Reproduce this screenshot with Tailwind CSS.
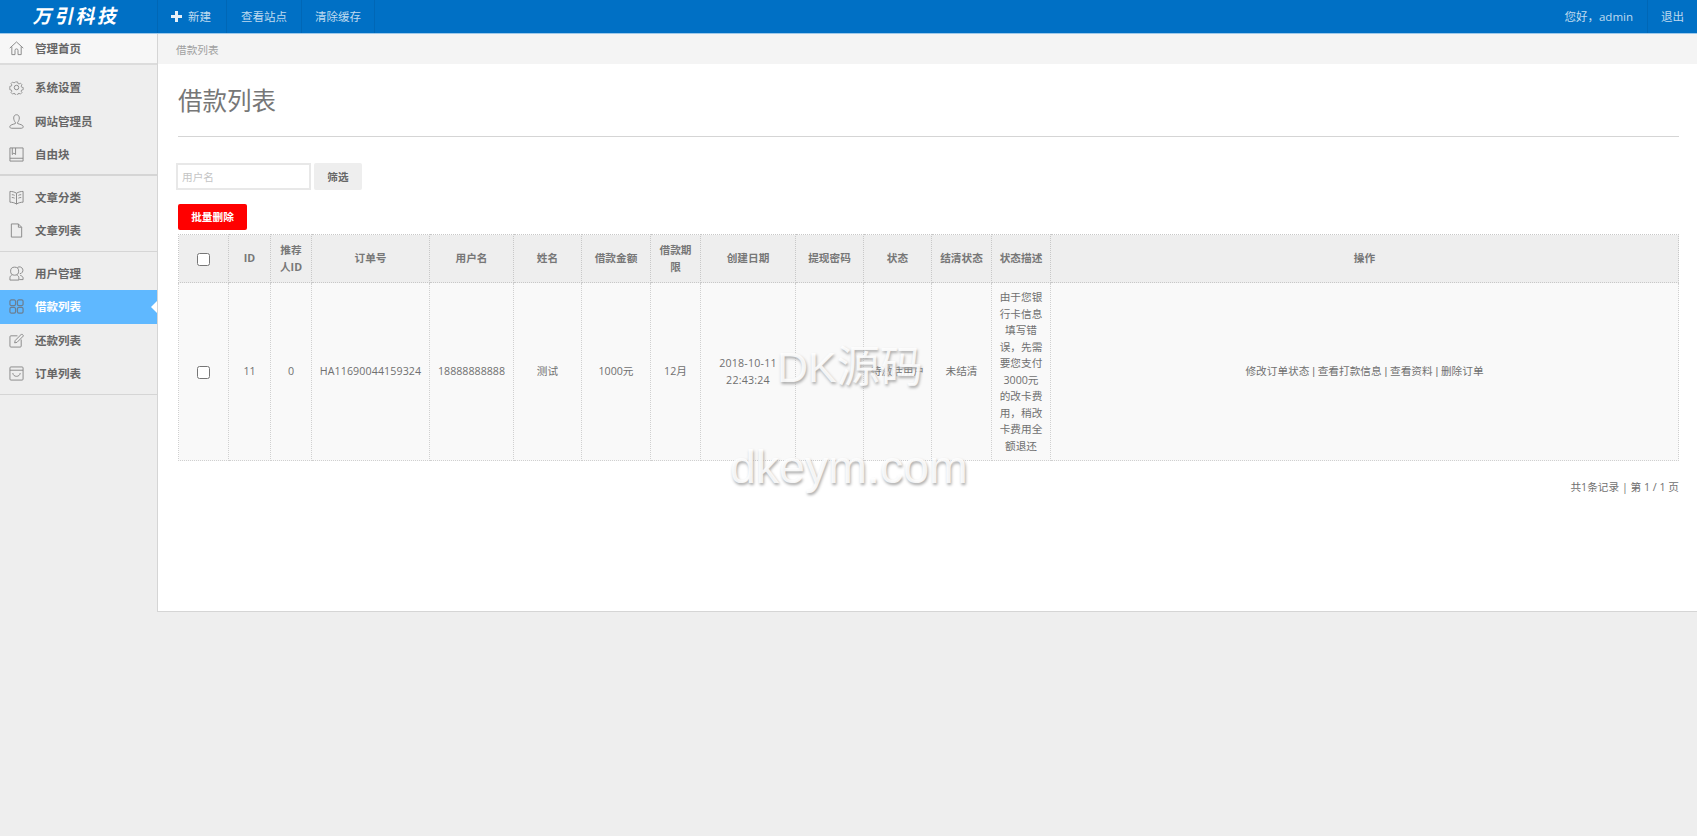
<!DOCTYPE html>
<html lang="zh">
<head>
  <meta charset="UTF-8">
  <title>借款列表</title>
  <script src="https://cdn.jsdelivr.net/npm/@tailwindcss/browser@4"></script>
</head>
<body class="relative h-screen overflow-hidden bg-[#eeeeee] text-[#707070] font-['Open_Sans','Noto_Sans_CJK_SC',sans-serif]">

  <!-- top bar -->
  <header class="flex h-[34px] border-b border-[#9ec9ea] bg-[#0070c5] text-[11.5px] text-white/75">
    <div class="flex w-[157px] items-center justify-center">
      <span class="-skew-x-12 pr-[3px] text-[19px] font-bold tracking-[2.5px] text-white">万引科技</span>
    </div>
    <a class="flex w-[69px] items-center gap-[6px] border-l border-[#0067b6] pl-[13px]">
      <svg class="h-[11px] w-[11px]" viewBox="0 0 11 11"><path d="M4 0h3v4h4v3H7v4H4V7H0V4h4z" fill="#e6f0f8"/></svg>
      新建
    </a>
    <a class="flex w-[75px] items-center justify-center border-l border-[#0067b6]">查看站点</a>
    <a class="flex w-[74px] items-center justify-center border-x border-[#0067b6]">清除缓存</a>
    <div class="ml-auto flex items-center pr-[14px]">您好，admin</div>
    <a class="flex w-[50px] items-center justify-center border-l border-[#0067b6]">退出</a>
  </header>

  <div class="flex">
    <!-- sidebar -->
    <aside class="w-[157px] shrink-0 text-[11.5px] font-bold text-[#666]">
      <a class="flex h-[31px] items-center gap-[11px] border-b-2 border-[#dcdcdc] bg-[#f7f7f7] pl-[9px]">
        <svg class="h-[15px] w-[15px]" viewBox="0 0 16 16" fill="none" stroke="#888"><path d="M.8 7.6 8 1l7.2 6.6M3 6v8.5h3.4V10a1.6 1.6 0 0 1 3.2 0v4.5H13V6"/></svg>
        管理首页
      </a>

      <div class="border-b-2 border-[#d5d5d5] pt-[6px] pb-[2px]">
        <a class="flex h-[33.5px] items-center gap-[11px] pl-[9px]">
          <svg class="h-[15px] w-[15px]" viewBox="0 0 16 16" fill="none" stroke="#888"><path d="m6.6 1h2.8l.4 2 1.4.6 1.7-1.1 2 2-1.1 1.7.6 1.4 2 .4v2.8l-2 .4-.6 1.4 1.1 1.7-2 2-1.7-1.1-1.4.6-.4 2H6.6l-.4-2-1.4-.6-1.7 1.1-2-2 1.1-1.7-.6-1.4-2-.4V6.6l2-.4.6-1.4-1.1-1.7 2-2 1.7 1.1 1.4-.6z" transform="translate(1.2 1.2) scale(.85)"/><circle cx="8" cy="8" r="2.4"/></svg>
          系统设置
        </a>
        <a class="flex h-[33.5px] items-center gap-[11px] pl-[9px]">
          <svg class="h-[15px] w-[15px]" viewBox="0 0 16 16" fill="none" stroke="#888"><path d="M8 .8c2 0 3 1.500 3 3.400 0 2-1 4-1.800 4.600v1.400c2 .8 6 1.300 6 3.400 0 1-1 1.600-2 1.600H2.800c-1 0-2-.6-2-1.600 0-2.100 4-2.600 6-3.400V8.800C6 8.200 5 6.200 5 4.200 5 2.300 6 .8 8 .8z"/></svg>
          网站管理员
        </a>
        <a class="flex h-[33.5px] items-center gap-[11px] pl-[9px]">
          <svg class="h-[15px] w-[15px]" viewBox="0 0 16 16" fill="none" stroke="#888"><path d="M1 1h14v14H1zM1 12h14M3.500 1v7l1.700-1.500L7 8V1"/></svg>
          自由块
        </a>
      </div>

      <div class="border-b border-[#d5d5d5] pt-[5px] pb-[3px]">
        <a class="flex h-[33.5px] items-center gap-[11px] pl-[9px]">
          <svg class="h-[15px] w-[15px]" viewBox="0 0 16 16" fill="none" stroke="#888"><path d="M8 3.500C6 2 3 1.500 1 1.500v11.500c2 0 5 .5 7 2 2-1.500 5-2 7-2V1.500c-2 0-5 .5-7 2zM8 3.500V15M3 5c1 0 2 .2 3 .7M3 8c1 0 2 .2 3 .7M13 5c-1 0-2 .2-3 .7M13 8c-1 0-2 .2-3 .7"/></svg>
          文章分类
        </a>
        <a class="flex h-[33.5px] items-center gap-[11px] pl-[9px]">
          <svg class="h-[15px] w-[15px]" viewBox="0 0 16 16" fill="none" stroke="#888"><path d="M2.500 1h7.500l3.500 3.500V15h-11zM10 1v3.500h3.500"/></svg>
          文章列表
        </a>
      </div>

      <div class="border-b border-[#d5d5d5] pt-[5px] pb-[3px]">
        <a class="flex h-[33.5px] items-center gap-[11px] pl-[9px]">
          <svg class="h-[15px] w-[15px]" viewBox="0 0 16 16" fill="none" stroke="#888"><circle cx="6" cy="5.500" r="4.300"/><path d="M9 1.600a3.700 3.700 0 1 1 2.500 6.700M3.500 9.300C2 10 1 11 1 12.500V15h9.500v-2.500c0-1.500-1-2.500-2.500-3.200M12 10c1.800.5 3 1.500 3 2.800V14.500h-4"/></svg>
          用户管理
        </a>
        <a class="relative flex h-[33.5px] items-center gap-[11px] bg-[#5fb8ff] pl-[9px] text-white">
          <svg class="h-[15px] w-[15px]" viewBox="0 0 16 16" fill="none" stroke="#6b7f92" stroke-width="1.300"><rect x="1" y="1" width="6" height="6" rx="1.500"/><rect x="9" y="1" width="6" height="6" rx="1.500"/><rect x="1" y="9" width="6" height="6" rx="1.500"/><rect x="9" y="9" width="6" height="6" rx="1.500"/></svg>
          借款列表
          <span class="absolute top-1/2 right-0 -translate-y-1/2 border-y-[6px] border-r-[6px] border-y-transparent border-r-white"></span>
        </a>
        <a class="flex h-[33.5px] items-center gap-[11px] pl-[9px]">
          <svg class="h-[15px] w-[15px]" viewBox="0 0 16 16" fill="none" stroke="#888"><path d="M9 3H2a1 1 0 0 0-1 1v10a1 1 0 0 0 1 1h10a1 1 0 0 0 1-1V7M6 10.500l.6-2.500L13.500 1l2 2-7 7z"/></svg>
          还款列表
        </a>
        <a class="flex h-[33.5px] items-center gap-[11px] pl-[9px]">
          <svg class="h-[15px] w-[15px]" viewBox="0 0 16 16" fill="none" stroke="#888"><path d="M2 1h12a1 1 0 0 1 1 1v12a1 1 0 0 1-1 1H2a1 1 0 0 1-1-1V2a1 1 0 0 1 1-1zM1 4.500h14M4 7.500c.5 2.500 2 3.500 4 3.500s3.500-1 4-3.500"/></svg>
          订单列表
        </a>
      </div>
    </aside>

    <!-- content -->
    <main class="h-[578px] flex-1 border-b border-l border-[#d5d5d5] bg-white">
      <div class="h-[30px] bg-[#f4f4f4] pl-[18px] text-[10.67px] leading-[32px] text-[#a0a0a0]">借款列表</div>

      <div class="pr-[18px] pl-[20px]">
        <h1 class="h-[73px] border-b border-[#d5d5d5] pt-[19px] text-[24.5px] leading-[36px] font-normal text-[#777]">借款列表</h1>

        <div class="-ml-[2px] mt-[26px] flex gap-[3px]">
          <input class="h-[27px] w-[135px] border-2 border-[#e8e8e8] bg-white pl-[4px] text-[10.67px] placeholder:text-[#c4c4c4]" placeholder="用户名">
          <button class="h-[27px] w-[48px] rounded-[2px] bg-[#eeeeee] text-[10.67px] font-bold text-[#666]">筛选</button>
        </div>

        <button class="mt-[14px] block h-[26px] w-[69px] rounded-[2px] bg-[#ff0000] text-[10.67px] font-bold text-white">批量删除</button>

        <table class="mt-[4px] w-full table-fixed border-collapse text-center text-[10.67px] leading-[16.5px]">
          <colgroup>
            <col class="w-[50px]"><col class="w-[42px]"><col class="w-[41px]"><col class="w-[118px]"><col class="w-[84px]"><col class="w-[68px]"><col class="w-[69px]"><col class="w-[50px]"><col class="w-[95px]"><col class="w-[68px]"><col class="w-[68px]"><col class="w-[60px]"><col class="w-[59px]"><col>
          </colgroup>
          <thead>
            <tr class="h-[48px] bg-[#eeeeee] font-bold text-[#777]">
              <th class="border border-dotted border-[#c8c8c8] align-middle"><input type="checkbox" class="align-middle"></th>
              <th class="border border-dotted border-[#c8c8c8] px-[6px]">ID</th>
              <th class="border border-dotted border-[#c8c8c8] px-[6px]">推荐人ID</th>
              <th class="border border-dotted border-[#c8c8c8] px-[6px]">订单号</th>
              <th class="border border-dotted border-[#c8c8c8] px-[6px]">用户名</th>
              <th class="border border-dotted border-[#c8c8c8] px-[6px]">姓名</th>
              <th class="border border-dotted border-[#c8c8c8] px-[6px]">借款金额</th>
              <th class="border border-dotted border-[#c8c8c8] px-[6px]">借款期限</th>
              <th class="border border-dotted border-[#c8c8c8] px-[6px]">创建日期</th>
              <th class="border border-dotted border-[#c8c8c8] px-[6px]">提现密码</th>
              <th class="border border-dotted border-[#c8c8c8] px-[6px]">状态</th>
              <th class="border border-dotted border-[#c8c8c8] px-[6px]">结清状态</th>
              <th class="border border-dotted border-[#c8c8c8] px-[6px]">状态描述</th>
              <th class="border border-dotted border-[#c8c8c8] px-[6px]">操作</th>
            </tr>
          </thead>
          <tbody>
            <tr class="h-[178px] bg-[#f9f9f9]">
              <td class="border border-dotted border-[#d0d0d0]"><input type="checkbox" class="align-middle"></td>
              <td class="border border-dotted border-[#d0d0d0]">11</td>
              <td class="border border-dotted border-[#d0d0d0]">0</td>
              <td class="border border-dotted border-[#d0d0d0] tracking-[.1px]">HA11690044159324</td>
              <td class="border border-dotted border-[#d0d0d0]">18888888888</td>
              <td class="border border-dotted border-[#d0d0d0]">测试</td>
              <td class="border border-dotted border-[#d0d0d0]">1000元</td>
              <td class="border border-dotted border-[#d0d0d0]">12月</td>
              <td class="border border-dotted border-[#d0d0d0] px-[10px] tracking-[.2px]">2018-10-11 22:43:24</td>
              <td class="border border-dotted border-[#d0d0d0]"></td>
              <td class="border border-dotted border-[#d0d0d0]">待激活用户</td>
              <td class="border border-dotted border-[#d0d0d0]">未结清</td>
              <td class="border border-dotted border-[#d0d0d0] px-[7px]">由于您银行卡信息填写错误，先需要您支付3000元的改卡费用，稍改卡费用全额退还</td>
              <td class="border border-dotted border-[#d0d0d0]">修改订单状态 <span class="font-['Liberation_Sans']">|</span> 查看打款信息 <span class="font-['Liberation_Sans']">|</span> 查看资料 <span class="font-['Liberation_Sans']">|</span> 删除订单</td>
            </tr>
          </tbody>
        </table>

        <div class="mt-[18px] text-right text-[10.67px] leading-[16px]">共1条记录 | 第 1 / 1 页</div>
      </div>
    </main>
  </div>

  <!-- watermark over the table -->
  <div class="absolute top-[337px] left-[777px] font-['Liberation_Sans','Noto_Sans_CJK_SC',sans-serif] text-[43px] leading-[60px] text-white/85 [text-shadow:1px_2px_3px_#a8a8a8]">DK源码</div>
  <div class="absolute top-[437px] left-[730px] font-['Liberation_Sans',sans-serif] text-[46.500px] leading-[60px] text-white/85 [text-shadow:1px_2px_3px_#a8a8a8]">dkeym.com</div>
</body>
</html>
